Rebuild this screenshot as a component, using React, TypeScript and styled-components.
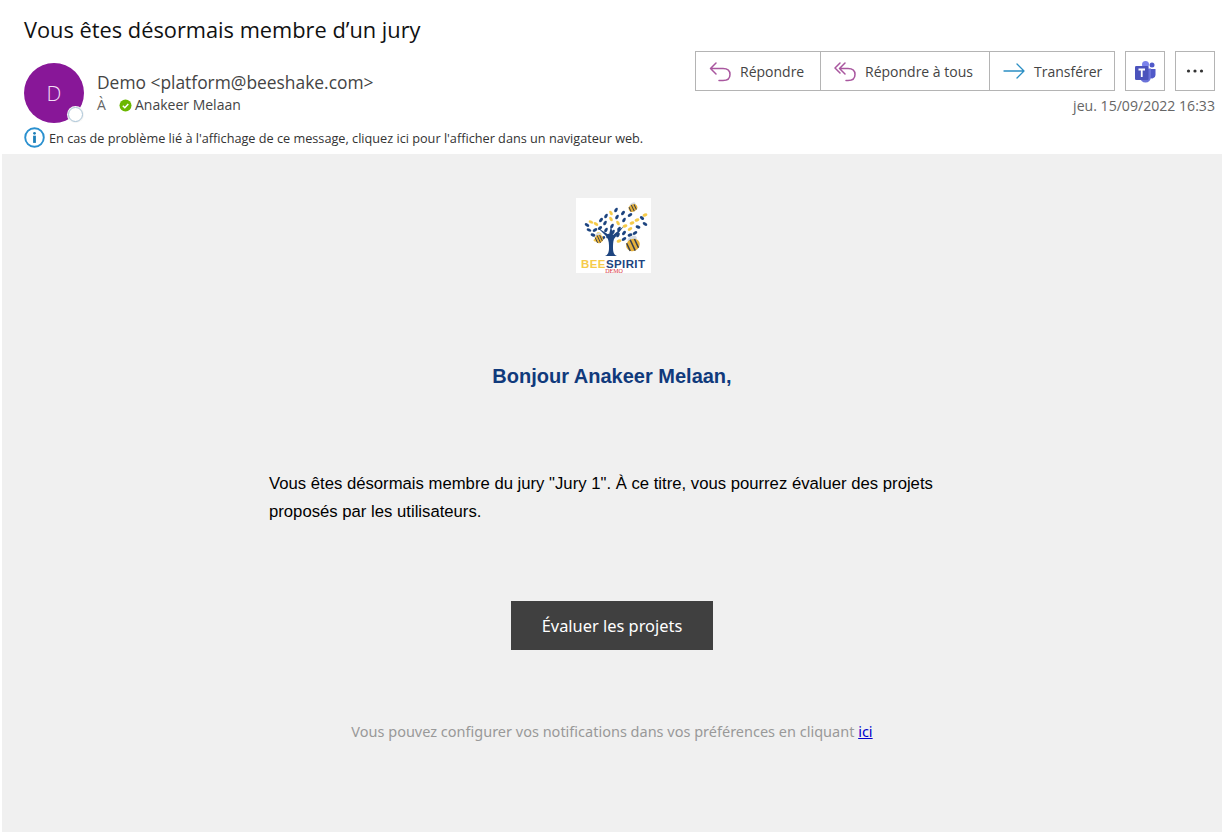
import React from "react";
import styled, { createGlobalStyle } from "styled-components";

const Global = createGlobalStyle`
  html, body { margin: 0; padding: 0; background: #fff; }
  body { font-family: "Open Sans", "Noto Sans", sans-serif; }
`;
const Page = styled.div`width: 1225px; height: 832px; overflow: hidden; display: flex; flex-direction: column;`;
const Header = styled.header`height: 154px; padding: 15px 10px 0 24px; box-sizing: border-box; flex: none;`;
const Subject = styled.h1`margin: 0; font-size: 21.8px; line-height: 29px; font-weight: 400; color: #111;`;
const MetaRow = styled.div`display: flex; justify-content: space-between; margin-top: 7px; height: 72px;`;
const Sender = styled.div`display: flex; gap: 13px; padding-top: 12px;`;
const Avatar = styled.div`position: relative; width: 60px; height: 60px; border-radius: 50%; background: #881798; color: #f3dff6; display: flex; align-items: center; justify-content: center; font-size: 21px; font-weight: 300;`;
const Presence = styled.span`position: absolute; right: 1px; bottom: 1px; width: 13px; height: 13px; border-radius: 50%; background: #fff; border: 1px solid #a9c4d6; box-shadow: 0 0 0 1px #f4f4f4;`;
const SenderText = styled.div`display: flex; flex-direction: column; padding-top: 6px;`;
const From = styled.div`font-size: 17.4px; line-height: 26px; color: #444;`;
const To = styled.div`display: flex; align-items: center; font-size: 14px; line-height: 20px; color: #444;`;
const ToLabel = styled.span`width: 22px; color: #666;`;
const Check = styled.span`width: 13px; height: 13px; margin-right: 3px; display: inline-flex;`;
const Right = styled.div`display: flex; flex-direction: column; align-items: flex-end;`;
const Actions = styled.div`display: flex; gap: 10px;`;
const Group = styled.div`display: flex; height: 40px; border: 1px solid #b4b4b4; box-sizing: border-box;`;
const Action = styled.button<{ $w: number }>`
  width: ${p => p.$w}px; height: 38px; display: flex; align-items: center; gap: 9px; padding: 0 0 0 13px;
  border: 0; border-right: 1px solid #b4b4b4; background: #fff; font: 14px "Open Sans", sans-serif; color: #444;
  &:last-child { border-right: 0; }
`;
const Square = styled.button`width: 40px; height: 40px; box-sizing: border-box; border: 1px solid #b4b4b4; background: #fff; display: flex; align-items: center; justify-content: center; padding: 0;`;
const DateText = styled.div`margin-top: 5px; font-size: 14.1px; line-height: 20px; color: #666;`;
const Notice = styled.div`display: flex; align-items: center; gap: 4px; font-size: 12.7px; line-height: 20px; color: #333; margin-top: 4px;`;
const Body = styled.main`flex: 1; margin: 0 3px 0 2px; background: #f0f0f0; display: flex; flex-direction: column; align-items: center; padding-top: 44px;`;
const Logo = styled.div`width: 75px; height: 75px; background: #fff; flex: none; margin-left: 2px;`;
const Greeting = styled.h2`margin: 91px 0 0; font: bold 20px/24px "Liberation Sans", Arial, sans-serif; color: #103a7c;`;
const Paragraph = styled.p`width: 686px; margin: 82px 0 0; font: 16.7px/28px "Liberation Sans", Arial, sans-serif; color: #000;`;
const Cta = styled.a`width: 202px; height: 49px; margin-top: 75px; background: #404040; color: #fff; display: flex; align-items: center; justify-content: center; font: 400 16.4px "Noto Sans", sans-serif;`;
const Foot = styled.p`margin: 71px 0 0; font: 14.5px/20px "Noto Sans", sans-serif; color: #999;`;
const FootLink = styled.a`color: #0000cc; text-decoration: underline;`;

const stroke = { fill: "none", strokeWidth: 1.5, strokeLinecap: "round" as const, strokeLinejoin: "round" as const };
const Reply = () => (
  <svg width="22" height="22" viewBox="0 0 22 22" {...stroke} stroke="#a9579f">
    <path d="M7 3 1.500 8.500 7 14M1.500 8.500H14c4.500 0 7 2.500 7 6s-2.500 6-7 6h-4" />
  </svg>
);
const ReplyAll = () => (
  <svg width="22" height="22" viewBox="0 0 22 22" {...stroke} stroke="#a9579f">
    <path d="M6 3 1 8l5 5M11 3 5.500 8.500 11 14M5.500 8.500H14c4.500 0 7 2.500 7 6s-2.500 6-7 6h-2" />
  </svg>
);
const Forward = () => (
  <svg width="22" height="22" viewBox="0 0 22 22" {...stroke} strokeWidth={1.3} stroke="#2b8fc4">
    <path d="M1 11h20M14 4l7 7-7 7" />
  </svg>
);
const Teams = () => (
  <svg width="24" height="24" viewBox="0 0 24 24">
    <circle cx="19" cy="6" r="2.500" fill="#5059c9" />
    <circle cx="12.500" cy="5.500" r="3.500" fill="#7b83eb" />
    <path d="M16 10h6.500v6a3.500 3.500 0 0 1-6.500 1.800z" fill="#5059c9" />
    <path d="M7 9.500h11v8.500a5.500 5.500 0 0 1-11 0z" fill="#6a72d8" />
    <rect x="2" y="7" width="13.500" height="14" rx="1.300" fill="#4b53bc" />
    <path d="M5.500 10.500h6.500M8.750 10.500v7.500" stroke="#fff" strokeWidth="1.800" fill="none" />
  </svg>
);
const Dots = () => (
  <svg width="18" height="4" viewBox="0 0 18 4" fill="#333">
    <circle cx="2.500" cy="2" r="1.600" /><circle cx="9" cy="2" r="1.600" /><circle cx="15.500" cy="2" r="1.600" />
  </svg>
);
const InfoIcon = () => (
  <svg width="21" height="21" viewBox="0 0 21 21">
    <circle cx="10.500" cy="10.500" r="9.300" fill="#fff" stroke="#2a90cf" strokeWidth="1.900" />
    <circle cx="10.500" cy="6.300" r="1.400" fill="#1e7fb8" />
    <rect x="9.100" y="8.700" width="2.800" height="7.200" fill="#1e7fb8" />
  </svg>
);
const N = "#1d447f";
const Y = "#f6cb4a";
const leaves: [number, number, string, number][] = [
  [11,27,N,30],[15,24,Y,25],[20,26,Y,30],[13,32,N,25],[19,32,N,-30],[24,30,N,-40],[17,37,N,20],[23,36,Y,20],[20,42,Y,-10],[27,40,N,-30],
  [25,22,N,-50],[30,18,N,-60],[29,25,N,-60],[30,32,N,-60],[32,38,N,-60],[35,15,Y,60],[35,21,Y,60],[36,28,N,-60],[37,34,N,-60],
  [40,12,N,-60],[41,19,N,-60],[42,25,Y,60],[43,31,N,-60],[42,37,N,-60],[47,15,N,-50],[48,22,N,-60],[49,28,Y,-20],[48,35,N,-50],
  [54,17,N,-30],[56,25,Y,-20],[54,31,Y,-30],[54,37,N,-20],[61,22,Y,-20],[62,29,N,20],[59,35,N,-30],[66,20,N,40],[69,17,Y,-20],[69,26,N,30],[43,43,Y,-20],[48,41,N,-30],
];
const Bee = ({ x, y, rx, ry }: { x: number; y: number; rx: number; ry: number }) => (
  <g transform={`translate(${x} ${y}) rotate(-25)`}>
    <ellipse rx={rx * 0.7} ry={ry * 0.5} cy={-ry * 0.95} cx={rx * 0.25} fill="#d5dbe3" />
    <ellipse rx={rx} ry={ry} fill="#e8b23a" />
    <path d={`M${-rx * 0.72} ${-ry * 0.72}V${ry * 0.72}M${-rx * 0.05} ${-ry}V${ry}M${rx * 0.55} ${-ry * 0.8}V${ry * 0.8}`} stroke="#39404e" strokeWidth={rx * 0.22} />
  </g>
);
const LogoArt = () => (
  <svg width="75" height="75" viewBox="0 0 75 75">
    <path d="M29 58c3-1 4-4 4-8 0-4 0-7-2-11l-9-9 11 7 2-9 2 9 11-9-10 13c-1 3-1 6-1 9 0 4 1 7 4 8z" fill={N} />
    {leaves.map(([x, y, c, a], i) => (
      <ellipse key={i} cx={x} cy={y} rx="2.500" ry="1.500" fill={c} transform={`rotate(${a} ${x} ${y})`} />
    ))}
    <Bee x={57} y={10} rx={4.500} ry={3.500} />
    <Bee x={23} y={41} rx={4} ry={4} />
    <Bee x={57} y={47} rx={7} ry={6} />
    <text x="5" y="70" textLength="64" lengthAdjust="spacing" fontFamily="Liberation Sans, sans-serif" fontSize="11.500">
      <tspan fill={Y} fontWeight="700">BEE</tspan><tspan fill={N} fontWeight="700">SPIRIT</tspan>
    </text>
    <text x="38" y="75" textAnchor="middle" fontFamily="Liberation Serif, serif" fontSize="6" fill="#d8323a">DEMO</text>
  </svg>
);

export default function App() {
  return (
    <Page>
      <Global />
      <Header>
        <Subject>Vous êtes désormais membre d’un jury</Subject>
        <MetaRow>
          <Sender>
            <Avatar>D<Presence /></Avatar>
            <SenderText>
              <From>Demo &lt;platform@beeshake.com&gt;</From>
              <To>
                <ToLabel>À</ToLabel>
                <Check>
                  <svg width="13" height="13" viewBox="0 0 13 13">
                    <circle cx="6.500" cy="6.500" r="6" fill="#6bb700" />
                    <path d="M3.800 6.700l2 2 3.500-3.800" stroke="#fff" strokeWidth="1.500" fill="none" />
                  </svg>
                </Check>
                Anakeer Melaan
              </To>
            </SenderText>
          </Sender>
          <Right>
            <Actions>
              <Group>
                <Action $w={125}><Reply />Répondre</Action>
                <Action $w={169}><ReplyAll />Répondre à tous</Action>
                <Action $w={124}><Forward />Transférer</Action>
              </Group>
              <Square aria-label="Teams"><Teams /></Square>
              <Square aria-label="Plus"><Dots /></Square>
            </Actions>
            <DateText>jeu. 15/09/2022 16:33</DateText>
          </Right>
        </MetaRow>
        <Notice><InfoIcon />En cas de problème lié à l'affichage de ce message, cliquez ici pour l'afficher dans un navigateur web.</Notice>
      </Header>
      <Body>
        <Logo><LogoArt /></Logo>
        <Greeting>Bonjour Anakeer Melaan,</Greeting>
        <Paragraph>Vous êtes désormais membre du jury "Jury 1". À ce titre, vous pourrez évaluer des projets proposés par les utilisateurs.</Paragraph>
        <Cta>Évaluer les projets</Cta>
        <Foot>Vous pouvez configurer vos notifications dans vos préférences en cliquant <FootLink>ici</FootLink></Foot>
      </Body>
    </Page>
  );
}
